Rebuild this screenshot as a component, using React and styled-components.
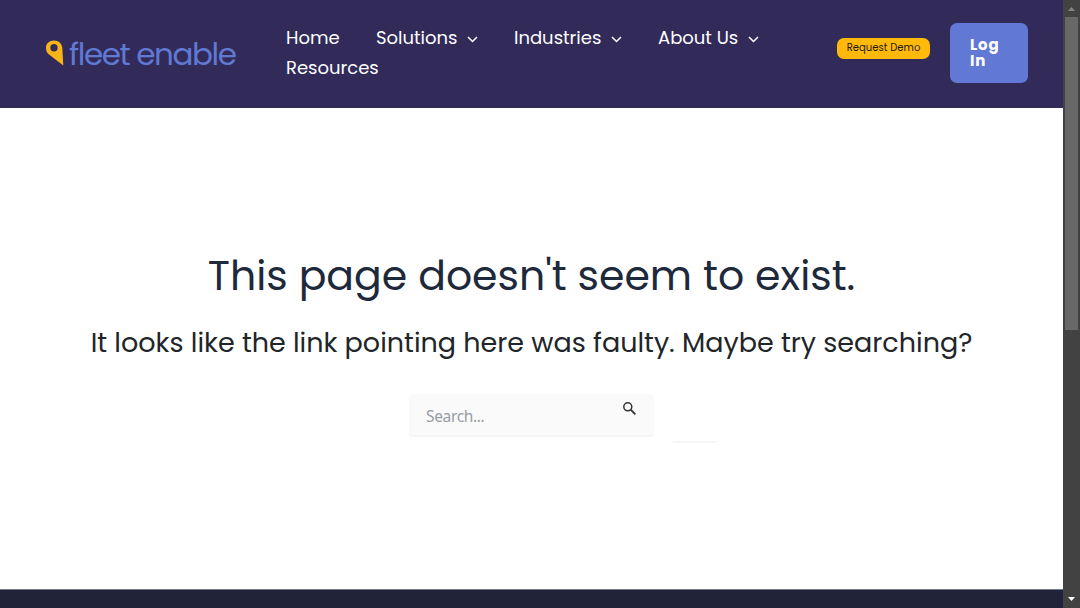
import React from 'react';
import styled, { createGlobalStyle } from 'styled-components';

const GlobalStyle = createGlobalStyle`
  * { box-sizing: border-box; }
  html, body, #root { height: 100%; }
  body { margin: 0; overflow: hidden; font-family: Poppins, Inter, sans-serif; background: #fff; }
`;

const Viewport = styled.div`
  display: flex;
  height: 608px;
  overflow: hidden;
`;

const Page = styled.div`
  display: flex;
  flex-direction: column;
  width: 1063px;
`;

const Header = styled.header`
  display: flex;
  flex: none;
  height: 108px;
  padding: 23px 35px 0 45px;
  background: #322a59;
`;

const Logo = styled.a`
  display: flex;
  width: 241px;
  padding-top: 10px;
`;

const Nav = styled.nav`
  display: flex;
  flex-wrap: wrap;
  align-content: flex-start;
  column-gap: 36px;
  width: 515px;
`;

const NavLink = styled.a`
  display: flex;
  align-items: center;
  gap: 10px;
  height: 30px;
  color: #fff;
  font-size: 18px;
  font-weight: 400;
  line-height: 30px;
  white-space: nowrap;
`;

const NavText = styled.span`
  width: ${(p) => p.$width}px;
`;

const Chevron = styled.svg`
  width: 11px;
  height: 7px;
  margin-top: 2px;
`;

const Actions = styled.div`
  display: flex;
  align-items: flex-start;
  gap: 20px;
  margin-left: auto;
`;

const DemoButton = styled.button`
  width: 93px;
  height: 21px;
  margin: 15px 0 0;
  padding: 0 0 2px;
  border: 0;
  border-radius: 7px;
  background: #ffb90b;
  color: #24180b;
  font: 400 10px/18px Poppins, Inter, sans-serif;
  letter-spacing: 0.05px;
  white-space: nowrap;
`;

const LoginButton = styled.button`
  width: 78px;
  height: 60px;
  padding: 0 20px;
  border: 0;
  border-radius: 7px;
  background: #6179d5;
  color: #fff;
  font: 700 15px/16px Poppins, Inter, sans-serif;
  letter-spacing: 0.9px;
  text-align: left;
`;

const Main = styled.main`
  display: flex;
  flex: none;
  flex-direction: column;
  align-items: center;
  height: 481px;
  padding-top: 142px;
  background: #fff;
`;

const Title = styled.h1`
  margin: 0;
  color: #1e293b;
  font-size: 41px;
  font-weight: 400;
  line-height: 52px;
  white-space: nowrap;
`;

const Subtitle = styled.p`
  margin: 20px 0 0;
  color: #212529;
  font-size: 27px;
  font-weight: 400;
  line-height: 42px;
  white-space: nowrap;
`;

const SearchForm = styled.form`
  display: flex;
  align-items: flex-start;
  width: 309px;
  margin: 30px 0 0 64px;
`;

const SearchBox = styled.label`
  display: flex;
  justify-content: space-between;
  width: 245px;
  height: 43px;
  padding: 0 18px 0 17px;
  border-radius: 4px;
  background: #fafafa;
  border-bottom: 2px solid #f6f6f6;
`;

const SearchInput = styled.input`
  width: 160px;
  height: 44px;
  padding: 0;
  border: 0;
  outline: 0;
  background: transparent;
  font: 400 15.500px/24px "Noto Sans", "Open Sans", sans-serif;
  letter-spacing: -0.35px;
  &::placeholder { color: #989ca5; opacity: 1; }
`;

const SearchIcon = styled.svg`
  width: 13px;
  height: 13px;
  margin-top: 8px;
`;

const SubmitEdge = styled.span`
  width: 44px;
  height: 2px;
  margin: 47px 0 0 19px;
  background: #f6f6f7;
`;

const Footer = styled.footer`
  flex: 1;
  border-top: 1px solid #747986;
  background: #212338;
`;

const Scrollbar = styled.aside`
  display: flex;
  flex-direction: column;
  align-items: center;
  width: 17px;
  background: #424242;
`;

const ScrollThumb = styled.div`
  width: 13px;
  height: 313px;
  background: #686868;
`;

const ScrollArrow = styled.svg`
  width: 17px;
  height: 17px;
  margin-top: ${(p) => (p.$end ? 'auto' : '0')};
`;

const links = [
  { label: 'Home', width: 54 },
  { label: 'Solutions', width: 81, menu: true },
  { label: 'Industries', width: 87, menu: true },
  { label: 'About Us', width: 80, menu: true },
  { label: 'Resources', width: 93 },
];

export default function App() {
  return (
    <>
      <GlobalStyle />
      <Viewport>
        <Page>
          <Header>
            <Logo aria-label="fleet enable">
              <svg width="194" height="42" viewBox="0 0 194 42">
                <path fillRule="evenodd" fill="#f8b419" d="M1 14.500C1 10.500 4.500 7.500 9 7.500C13.500 7.500 17 10.500 17.300 15L18.300 32.500L4 21.500C2 20 1 17.700 1 14.500ZM9 11A3.700 3.700 0 1 0 9 18.400A3.700 3.700 0 1 0 9 11Z" />
                <text x="24" y="32" fill="#6079d2" fontFamily="Poppins, Inter, sans-serif" fontSize="31" fontWeight="400" textLength="168">fleet enable</text>
              </svg>
            </Logo>
            <Nav>
              {links.map((l) => (
                <NavLink key={l.label}>
                  <NavText $width={l.width}>{l.label}</NavText>
                  {l.menu && (
                    <Chevron viewBox="0 0 11 7" fill="none" stroke="#fff" strokeWidth="1.5">
                      <path d="M1 1l4.500 4.500L10 1" />
                    </Chevron>
                  )}
                </NavLink>
              ))}
            </Nav>
            <Actions>
              <DemoButton>Request Demo</DemoButton>
              <LoginButton>Log<br />In</LoginButton>
            </Actions>
          </Header>
          <Main>
            <Title>This page doesn't seem to exist.</Title>
            <Subtitle>It looks like the link pointing here was faulty. Maybe try searching?</Subtitle>
            <SearchForm>
              <SearchBox>
                <SearchInput placeholder="Search..." />
                <SearchIcon viewBox="0 0 13 13" fill="none" stroke="#333" strokeWidth="1.5">
                  <circle cx="4.800" cy="4.800" r="4" />
                  <path d="M7.700 7.700L12.300 12.300" strokeWidth="1.900" />
                </SearchIcon>
              </SearchBox>
              <SubmitEdge />
            </SearchForm>
          </Main>
          <Footer />
        </Page>
        <Scrollbar>
          <ScrollArrow viewBox="0 0 17 17"><path d="M5 11h7L8.500 7z" fill="#858585" /></ScrollArrow>
          <ScrollThumb />
          <ScrollArrow $end viewBox="0 0 17 17"><path d="M5 6h7L8.500 10z" fill="#fff" /></ScrollArrow>
        </Scrollbar>
      </Viewport>
    </>
  );
}
